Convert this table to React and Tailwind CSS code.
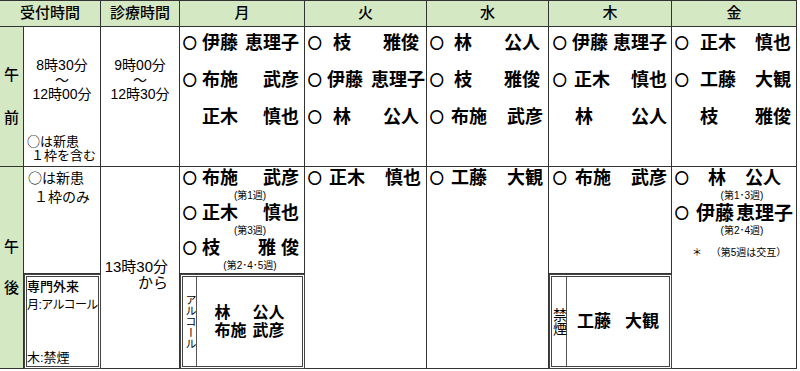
import React from 'react';

const cell = 'border-r border-b border-[#333]';
const head = `${cell} bg-[#d5e8c4] flex items-center justify-center text-[15px] font-medium`;
const boxed = 'border-[3px] border-double border-[#444]';
const cjk = "font-['Noto_Sans_CJK_JP',sans-serif]";

// ○ の印
const Maru = ({ show = true }) => (
  <span
    className={`w-[13px] shrink-0 text-center text-[13.5px] font-bold leading-none [-webkit-text-stroke:0.8px_black] ${cjk} ${show ? '' : 'invisible'}`}
  >
    ○
  </span>
);

const NameRow = ({ maru = true, family, given, pad, ml, fam = '', giv = '', size = 'text-[18px]' }) => (
  <div className={`flex items-center h-[22px] ${pad}`}>
    <Maru show={maru} />
    <div className={`flex flex-1 justify-between font-bold leading-none ${size} ${ml}`}>
      <span className={fam}>{family}</span>
      <span className={giv}>{given}</span>
    </div>
  </div>
);

const Note = ({ children }) => (
  <div className="h-[13px] text-[10px] leading-[13px] text-center pl-[16px]">{children}</div>
);

const cols = {
  mon: { pad: 'pl-[3px] pr-[5px]', ml: 'ml-[6px]' },
  tue: { pad: 'pl-[3px] pr-[1px]', ml: 'ml-[6px]' },
  wed: { pad: 'pl-[3px] pr-[5px]', ml: 'ml-[8px]' },
  thu: { pad: 'pl-[4px] pr-[4px]', ml: 'ml-[6px]' },
  fri: { pad: 'pl-[3px] pr-[5px]', ml: 'ml-[12px]' },
};

const Times = ({ from, to }) => (
  <div className="text-[14px] leading-[14.5px] text-center">
    <div>{from}</div>
    <div>～</div>
    <div>{to}</div>
  </div>
);

const Shin = () => <span className={cjk}>○</span>;

export default function App() {
  return (
    <div className="w-[800px] h-[371px] bg-white overflow-hidden text-black font-['Liberation_Sans','Noto_Sans_CJK_JP',sans-serif]">
      <div className="grid w-[797px] grid-cols-[24px_77px_79px_125px_122px_122px_123px_125px] grid-rows-[26px_140px_107px_95px] border-t border-[#333]">
        {/* 見出し */}
        <div className={`${head} col-start-1 col-span-2 row-start-1`}>受付時間</div>
        <div className={`${head} col-start-3 row-start-1`}>診療時間</div>
        <div className={`${head} col-start-4 row-start-1`}>月</div>
        <div className={`${head} col-start-5 row-start-1`}>火</div>
        <div className={`${head} col-start-6 row-start-1`}>水</div>
        <div className={`${head} col-start-7 row-start-1`}>木</div>
        <div className={`${head} col-start-8 row-start-1`}>金</div>

        {/* 午前 */}
        <div className={`${cell} col-start-1 row-start-2 bg-[#d5e8c4] flex flex-col items-center justify-center gap-[21px] text-[15px] font-medium`}>
          <span>午</span>
          <span>前</span>
        </div>
        <div className={`${cell} col-start-2 row-start-2 flex flex-col pt-[31px] pb-[3px]`}>
          <Times from="8時30分" to="12時00分" />
          <div className="mt-auto text-[13px] leading-[14px] pl-[3px]">
            <div><Shin />は新患</div>
            <div className="pl-[4px]">１枠を含む</div>
          </div>
        </div>
        <div className={`${cell} col-start-3 row-start-2 pt-[31px]`}>
          <Times from="9時00分" to="12時30分" />
        </div>
        <div className={`${cell} col-start-4 row-start-2 flex flex-col gap-[15px] pt-[5px]`}>
          <NameRow {...cols.mon} family="伊藤" given="恵理子" />
          <NameRow {...cols.mon} family="布施" given="武彦" />
          <NameRow {...cols.mon} maru={false} family="正木" given="慎也" />
        </div>
        <div className={`${cell} col-start-5 row-start-2 flex flex-col gap-[15px] pt-[5px]`}>
          <NameRow {...cols.tue} family="枝" given="雅俊" fam="ml-[6px]" giv="mr-[6px]" />
          <NameRow {...cols.tue} family="伊藤" given="恵理子" />
          <NameRow {...cols.tue} family="林" given="公人" fam="ml-[6px]" giv="mr-[6px]" />
        </div>
        <div className={`${cell} col-start-6 row-start-2 flex flex-col gap-[15px] pt-[5px]`}>
          <NameRow {...cols.wed} family="林" given="公人" fam="ml-[3px]" giv="mr-[3px]" />
          <NameRow {...cols.wed} family="枝" given="雅俊" fam="ml-[3px]" giv="mr-[3px]" />
          <NameRow {...cols.wed} family="布施" given="武彦" />
        </div>
        <div className={`${cell} col-start-7 row-start-2 flex flex-col gap-[15px] pt-[5px]`}>
          <NameRow {...cols.thu} family="伊藤" given="恵理子" />
          <NameRow {...cols.thu} family="正木" given="慎也" fam="ml-[2px]" />
          <NameRow {...cols.thu} maru={false} family="林" given="公人" fam="ml-[3px]" />
        </div>
        <div className={`${cell} col-start-8 row-start-2 flex flex-col gap-[15px] pt-[5px]`}>
          <NameRow {...cols.fri} family="正木" given="慎也" />
          <NameRow {...cols.fri} family="工藤" given="大観" />
          <NameRow {...cols.fri} maru={false} family="枝" given="雅俊" />
        </div>

        {/* 午後 */}
        <div className={`${cell} col-start-1 row-start-3 row-span-2 bg-[#d5e8c4] flex flex-col items-center justify-center gap-[19px] text-[15px] font-medium`}>
          <span>午</span>
          <span>後</span>
        </div>
        <div className={`${cell} col-start-2 row-start-3 text-[14px] leading-[19px] pl-[4px] pt-[1px]`}>
          <div><Shin />は新患</div>
          <div className="pl-[6px]">１枠のみ</div>
        </div>
        <div className={`${boxed} col-start-2 row-start-4 flex flex-col text-[12px] whitespace-nowrap`}>
          <div className="leading-[19px] text-[13px] font-medium">専門外来</div>
          <div className="leading-[19px] tracking-[-0.6px]">月:アルコール</div>
          <div className="mt-auto leading-[16px] text-[13px]">木:禁煙</div>
        </div>
        <div className={`${cell} col-start-3 row-start-3 row-span-2 text-right pr-[11px] pt-[92px] text-[15px] leading-[16px]`}>
          <div>13時30分</div>
          <div>から</div>
        </div>

        <div className={`${cell} col-start-4 row-start-3 flex flex-col`}>
          <NameRow {...cols.mon} family="布施" given="武彦" />
          <Note>(第1週)</Note>
          <NameRow {...cols.mon} family="正木" given="慎也" />
          <Note>(第3週)</Note>
          <NameRow {...cols.mon} family="枝" given="雅 俊" />
          <Note>(第2･4･5週)</Note>
        </div>
        <div className={`${boxed} col-start-4 row-start-4 flex`}>
          <div className="w-[14px] border-r border-[#555] flex items-center justify-center">
            <span className="[writing-mode:vertical-rl] text-[11px] leading-none">アルコール</span>
          </div>
          <div className="flex flex-1 items-center justify-center">
            <div className="w-[70px] text-[16px] font-bold leading-[18px]">
              <div className="flex justify-between"><span>林</span><span>公人</span></div>
              <div className="flex justify-between"><span>布施</span><span>武彦</span></div>
            </div>
          </div>
        </div>

        <div className={`${cell} col-start-5 row-start-3 row-span-2`}>
          <NameRow {...cols.tue} family="正木" given="慎也" fam="ml-[2px]" giv="mr-[4px]" />
        </div>
        <div className={`${cell} col-start-6 row-start-3 row-span-2`}>
          <NameRow {...cols.wed} family="工藤" given="大観" />
        </div>

        <div className={`${cell} col-start-7 row-start-3`}>
          <NameRow {...cols.thu} family="布施" given="武彦" fam="ml-[3px]" />
        </div>
        <div className={`${boxed} col-start-7 row-start-4 flex`}>
          <div className="w-[15px] border-r border-[#555] flex items-center justify-center">
            <span className="[writing-mode:vertical-rl] text-[14px] leading-none">禁煙</span>
          </div>
          <div className="flex flex-1 items-center justify-center">
            <div className="w-[82px] flex justify-between text-[17px] font-bold leading-none">
              <span>工藤</span>
              <span>大観</span>
            </div>
          </div>
        </div>

        <div className={`${cell} col-start-8 row-start-3 row-span-2 flex flex-col`}>
          <NameRow {...cols.fri} family="林" given="公人" fam="ml-[8px]" giv="mr-[10px]" />
          <Note>(第1･3週)</Note>
          <NameRow pad="pl-[3px] pr-[3px]" ml="ml-[8px]" size="text-[19px]" family="伊藤" given="恵理子" />
          <Note>(第2･4週)</Note>
          <div className="mt-[10px] text-[10px] leading-[12px] pl-[20px]">
            ＊ <span className="ml-[6px]">（第5週は交互）</span>
          </div>
        </div>
      </div>
    </div>
  );
}
